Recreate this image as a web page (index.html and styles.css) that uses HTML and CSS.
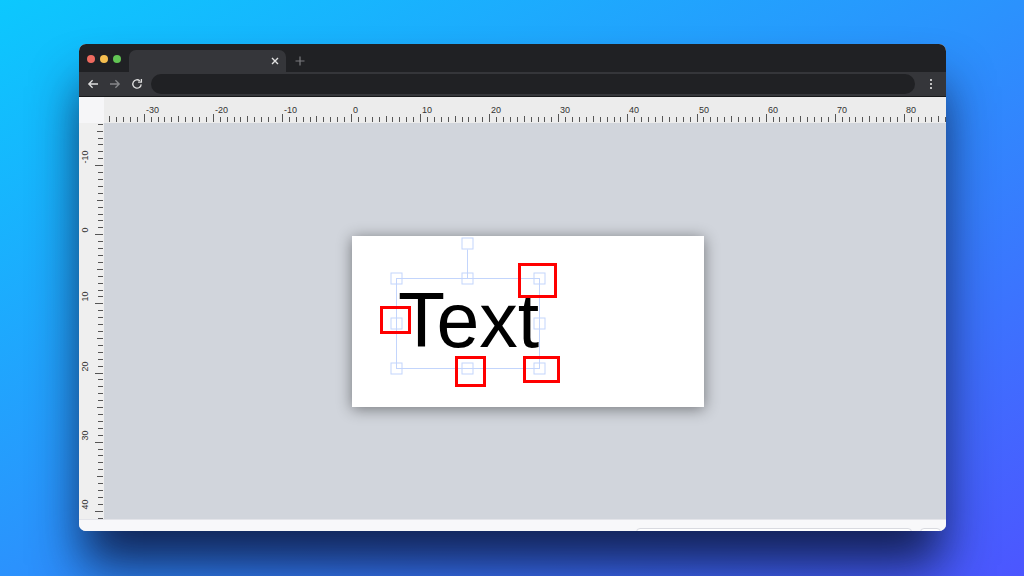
FILE: index.html
```html
<!DOCTYPE html>
<html lang="en">
<head>
    <meta charset="UTF-8">
    <title>Editor</title>
    <link rel="stylesheet" href="styles.css">
</head>
<body>
    <div class="stage">
        <div class="browser">
            <div class="tabstrip">
                <div class="lights">
                    <span class="light red"></span>
                    <span class="light yellow"></span>
                    <span class="light green"></span>
                </div>
                <div class="tab">
                    <svg class="tab-close" width="8" height="8" viewBox="0 0 8 8"><path d="M1 1L7 7M7 1L1 7" stroke="#e2e2e2" stroke-width="1.4" fill="none"/></svg>
                </div>
                <svg class="newtab" width="10" height="10" viewBox="0 0 10 10"><path d="M5 0.5V9.5M0.5 5H9.5" stroke="#7a7b7e" stroke-width="1.2" fill="none"/></svg>
            </div>

            <div class="toolbar">
                <svg class="nav-icon" width="12" height="12" viewBox="0 0 12 12"><path d="M11 6H1.8M5.6 2.2L1.8 6l3.8 3.8" stroke="#dedede" stroke-width="1.3" fill="none"/></svg>
                <svg class="nav-icon" width="12" height="12" viewBox="0 0 12 12"><path d="M1 6h9.2M6.4 2.2L10.2 6 6.4 9.8" stroke="#86878a" stroke-width="1.3" fill="none"/></svg>
                <svg class="nav-icon" width="12" height="12" viewBox="0 0 12 12"><path d="M10.2 6.4A4.2 4.2 0 1 1 8.9 2.9" stroke="#dedede" stroke-width="1.3" fill="none"/><path d="M10.4 0.9V4.2H7.1" stroke="#dedede" stroke-width="1.3" fill="none"/></svg>
                <div class="address"></div>
                <svg class="menu-dots" width="4" height="12" viewBox="0 0 4 12"><circle cx="2" cy="2" r="1.1" fill="#e6e6e6"/><circle cx="2" cy="6" r="1.1" fill="#e6e6e6"/><circle cx="2" cy="10" r="1.1" fill="#e6e6e6"/></svg>
            </div>

            <div class="editor">
                <div class="ruler-corner"></div>
                <div class="ruler ruler-top"><svg id="rulerTop" width="842" height="26"></svg></div>
                <div class="ruler ruler-left"><svg id="rulerLeft" width="25" height="396"></svg></div>
                <div class="canvas">
                    <div class="page">
                        <div class="page-text">Text</div>
                        <svg class="page-overlay" width="352" height="171" viewBox="0 0 352 171">
                            <!-- 选择框 -->
                            <g class="selection">
                                <rect x="44.5" y="42.5" width="143" height="90"/>
                                <path d="M115.5 13.5V42.5"/>
                                <rect x="110" y="2" width="11" height="11"/>
                                <rect x="39" y="37" width="11" height="11"/>
                                <rect x="110" y="37" width="11" height="11"/>
                                <rect x="182" y="37" width="11" height="11"/>
                                <rect x="39" y="82" width="11" height="11"/>
                                <rect x="182" y="82" width="11" height="11"/>
                                <rect x="39" y="127" width="11" height="11"/>
                                <rect x="110" y="127" width="11" height="11"/>
                                <rect x="182" y="127" width="11" height="11"/>
                            </g>
                            <!-- 标注框 -->
                            <g class="marks">
                                <rect x="167.5" y="28.5" width="36" height="32"/>
                                <rect x="29.5" y="71.5" width="28" height="25"/>
                                <rect x="104.5" y="121.5" width="28" height="28"/>
                                <rect x="172.5" y="121.5" width="34" height="24"/>
                            </g>
                        </svg>
                    </div>
                </div>
            </div>

            <div class="statusbar">
                <div class="field"></div>
                <div class="field field-small"></div>
            </div>
        </div>
    </div>

    <script>
        // 标尺：每格 1 单位，10 单位一个刻度数字
        const SCALE = 6.91;

        function buildRuler(id, size, origin, vertical) {
            const svg = document.getElementById(id);
            let ticks = '';
            let labels = '';
            for (let u = -40; u <= 90; u++) {
                const p = Math.round(origin + u * SCALE) + 0.5;
                if (p < 0 || p > size) continue;
                const len = u % 10 === 0 ? 8 : (u % 5 === 0 ? 6 : 5);
                if (vertical) {
                    ticks += '<line x1="' + (24 - len) + '" y1="' + p + '" x2="24" y2="' + p + '"/>';
                    if (u % 10 === 0) {
                        const y = p - 2;
                        labels += '<text x="9" y="' + y + '" transform="rotate(-90 9 ' + y + ')">' + u + '</text>';
                    }
                } else {
                    ticks += '<line x1="' + p + '" y1="' + (25 - len) + '" x2="' + p + '" y2="25"/>';
                    if (u % 10 === 0) {
                        labels += '<text x="' + (p + 1.5) + '" y="15.5">' + u + '</text>';
                    }
                }
            }
            svg.innerHTML = '<g class="ticks">' + ticks + '</g><g class="labels">' + labels + '</g>';
        }

        buildRuler('rulerTop', 842, 247, false);
        buildRuler('rulerLeft', 396, 111.3, true);
    </script>
</body>
</html>
```

FILE: styles.css
```css
body{
    margin: 0;
    width: 1024px;
    height: 576px;
    overflow: hidden;
    background: linear-gradient(to bottom right, #0cc8fe 0%, #2b92fd 50%, #4c56ff 100%);
    font-family: "Liberation Sans", Arial, sans-serif;
}

.stage{
    padding: 44px 0 0 79px;
}

.browser{
    width: 867px;
    height: 487px;
    border-radius: 7px;
    overflow: hidden;
    display: flex;
    flex-direction: column;
    background-color: #f8f8fa;
    box-shadow: 0 38px 50px -4px rgba(14, 24, 66, 0.9);
}

/* 标签栏 */
.tabstrip{
    height: 28px;
    flex: none;
    display: flex;
    align-items: flex-end;
    background-color: #202124;
}
.lights{
    align-self: flex-start;
    display: flex;
    gap: 5px;
    padding: 11px 0 0 8px;
}
.light{
    width: 8px;
    height: 8px;
    border-radius: 50%;
}
.red{ background-color: #ee6a5f; }
.yellow{ background-color: #f5be4f; }
.green{ background-color: #62c554; }

.tab{
    width: 157px;
    height: 22px;
    margin-left: 8px;
    box-sizing: border-box;
    padding-right: 7px;
    display: flex;
    justify-content: flex-end;
    align-items: center;
    background-color: #35363a;
    border-radius: 7px 7px 0 0;
}
.newtab{
    margin: 0 0 6px 9px;
}

/* 地址栏 */
.toolbar{
    height: 24px;
    flex: none;
    display: flex;
    align-items: center;
    gap: 10px;
    padding-left: 8px;
    background-color: #35363a;
    border-bottom: 1px solid #17181a;
}
.address{
    width: 764px;
    height: 20px;
    margin-left: -2px;
    border-radius: 10px;
    background-color: #202124;
}
.menu-dots{
    margin-left: 4px;
}

/* 编辑区 */
.editor{
    height: 422px;
    flex: none;
    display: grid;
    grid-template-columns: 25px 1fr;
    grid-template-rows: 26px 1fr;
}
.ruler-corner{
    background-color: #f6f6f8;
}
.ruler{
    overflow: hidden;
}
.ruler svg{
    display: block;
}
.ruler-top{
    background-color: #ececec;
}
.ruler-left{
    background-color: #efefef;
}
.ruler .ticks line{
    stroke: #555555;
    stroke-width: 1;
}
.ruler .labels text{
    font-family: "Liberation Sans", Arial, sans-serif;
    font-size: 9px;
    fill: #333333;
}

.canvas{
    overflow: hidden;
    padding: 113px 0 0 248px;
    background-color: #d1d5dc;
}
.page{
    width: 352px;
    height: 171px;
    position: relative;
    background-color: #ffffff;
    box-shadow: 0 2px 14px rgba(0, 0, 0, 0.45);
}
.page-text{
    position: absolute;
    left: 46px;
    top: 46px;
    font-size: 77px;
    line-height: 77px;
    color: #000000;
    white-space: nowrap;
}
.page-overlay{
    position: absolute;
    left: 0;
    top: 0;
}
.selection rect,
.selection path{
    fill: none;
    stroke: #c3d5fc;
    stroke-width: 1;
}
.marks rect{
    fill: none;
    stroke: #ff0000;
    stroke-width: 3;
}

/* 状态栏 */
.statusbar{
    height: 12px;
    flex: none;
    box-sizing: border-box;
    overflow: hidden;
    display: flex;
    justify-content: flex-end;
    gap: 8px;
    padding: 8px 5px 0 0;
    border-top: 1px solid #e3e4e9;
    background-color: #f8f8fa;
}
.field{
    width: 276px;
    height: 12px;
    flex: none;
    box-sizing: border-box;
    border: 1px solid #d9dae0;
    border-radius: 4px;
    background-color: #ffffff;
}
.field-small{
    width: 21px;
}
```
